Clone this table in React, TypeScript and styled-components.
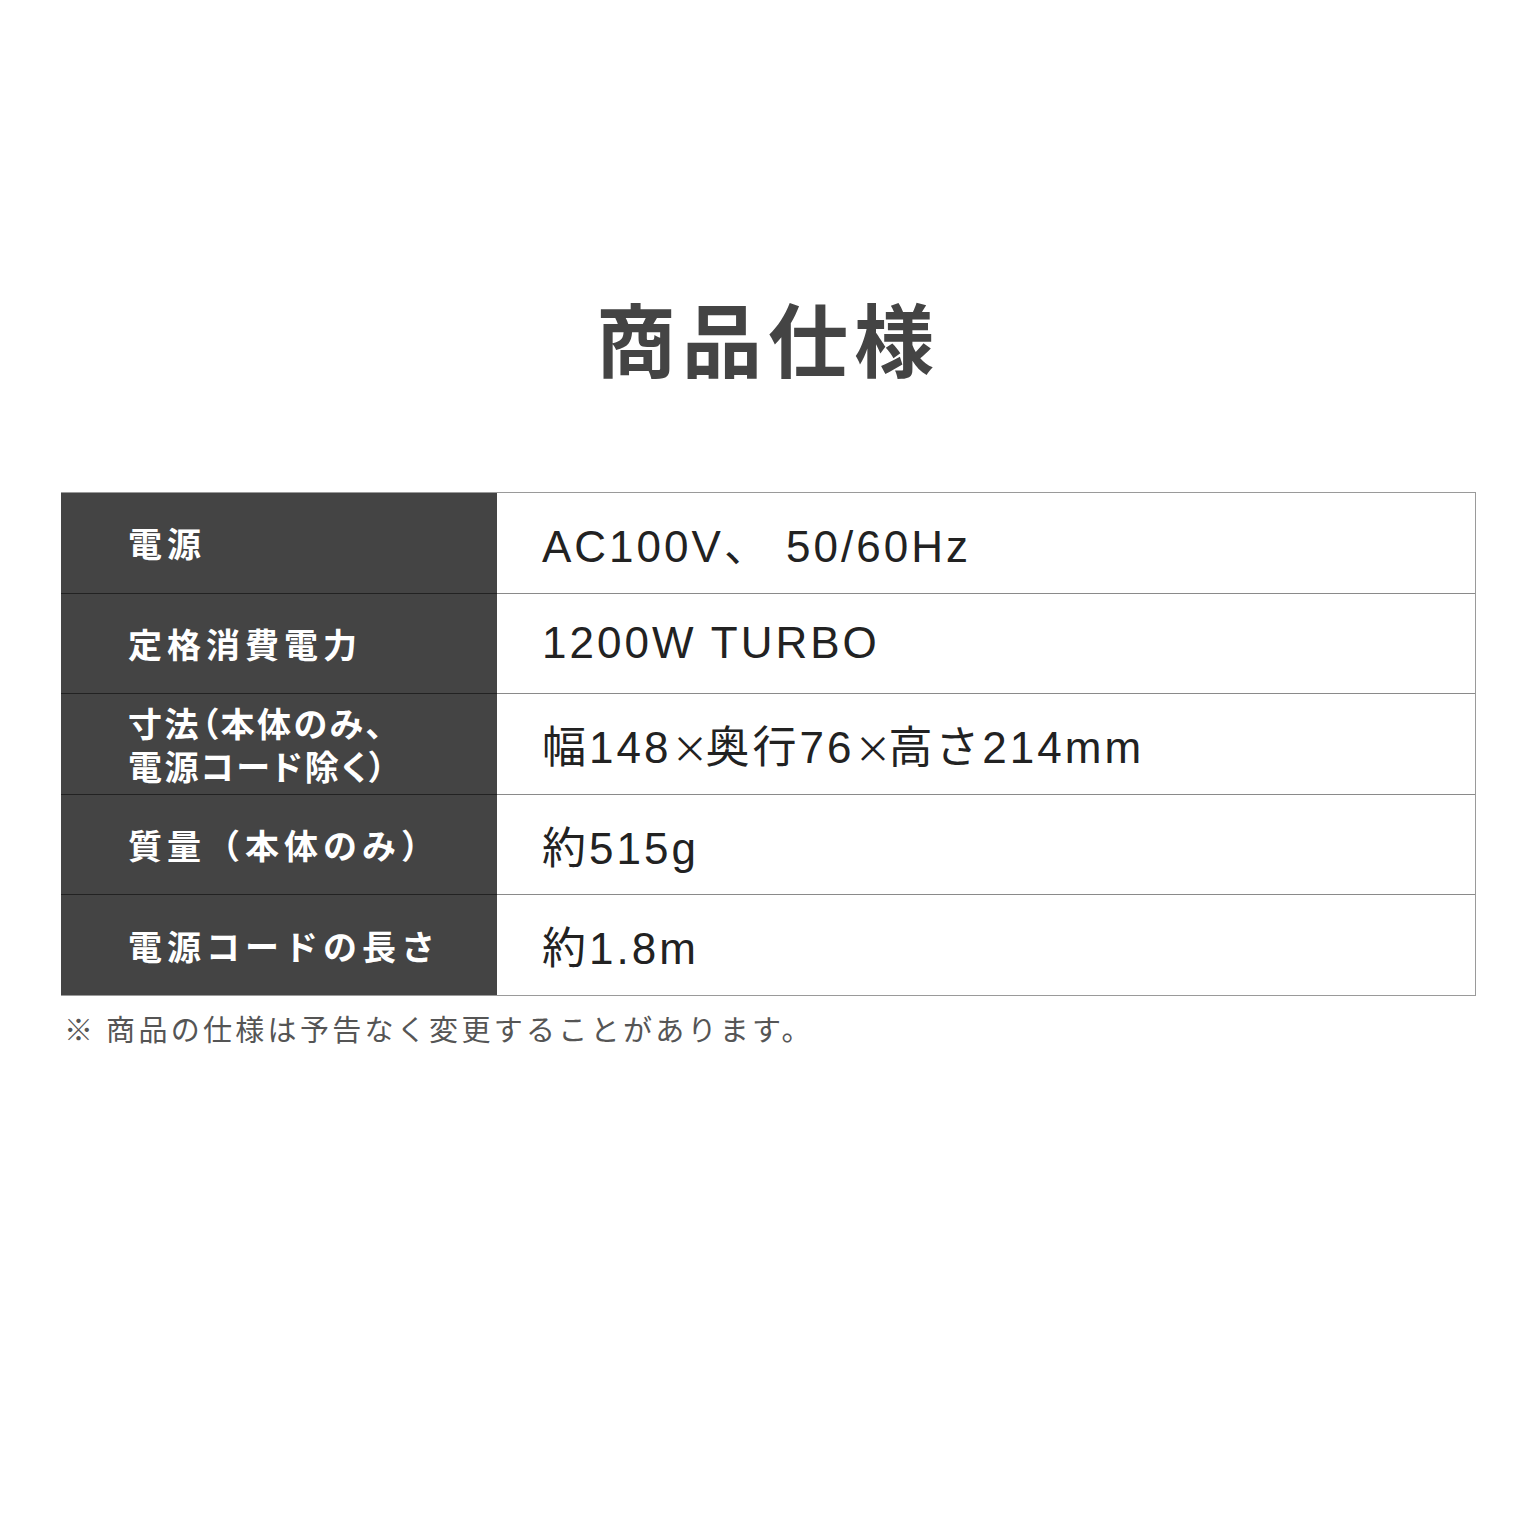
import styled, { createGlobalStyle } from 'styled-components';

const GlobalStyle = createGlobalStyle`
  html, body {
    margin: 0;
    padding: 0;
    background: #fff;
  }
  body {
    font-family: "Noto Sans CJK JP", "Noto Sans", sans-serif;
  }
`;

const Page = styled.div`
  width: 1536px;
  height: 1536px;
  box-sizing: border-box;
  padding-top: 290px;
  background: #fff;
`;

const Title = styled.h1`
  margin: 0;
  text-align: center;
  font-size: 80px;
  line-height: 92px;
  font-weight: 700;
  letter-spacing: 6px;
  color: #444;
`;

const SpecTable = styled.div`
  margin: 110px 60px 0 61px;
  border: 1px solid #9a9a9a;
  border-left: none;
  display: flex;
  flex-direction: column;
`;

const Row = styled.div<{ $first?: boolean }>`
  display: grid;
  grid-template-columns: 436px 1fr;
  height: 99.6px;
  border-top: ${p => (p.$first ? 'none' : '1px solid #8a8a8a')};
`;

const Label = styled.div<{ $first?: boolean; $tight?: boolean }>`
  background: #444;
  color: #fff;
  display: flex;
  align-items: center;
  padding-left: 67px;
  font-size: 34px;
  line-height: 43px;
  font-weight: 700;
  letter-spacing: ${p => (p.$tight ? '2.5px' : '5px')};
  font-feature-settings: ${p => (p.$tight ? '"palt"' : 'normal')};
  margin-top: ${p => (p.$first ? '0' : '-1px')};
  border-top: ${p => (p.$first ? 'none' : '1px solid #222')};
`;

const Value = styled.div`
  display: flex;
  align-items: center;
  padding-left: 45px;
  font-family: "Liberation Sans", "Noto Sans CJK JP", sans-serif;
  font-size: 44px;
  font-weight: 400;
  letter-spacing: 3px;
  color: #222;
  white-space: pre;
`;

// the multiplication sign is drawn full width in the reference
const Times = styled.span`
  font-family: "Noto Sans CJK JP", sans-serif;
  font-size: 37px;
  letter-spacing: -5px;
  margin-right: 2px;
`;

const Note = styled.p`
  margin: 12px 0 0 64px;
  font-size: 29px;
  line-height: 40px;
  letter-spacing: 3.3px;
  color: #555;
`;

const specs = [
  { label: ['電源'], value: 'AC100V、 50/60Hz' },
  { label: ['定格消費電力'], value: '1200W TURBO' },
  { label: ['寸法（本体のみ、', '電源コード除く）'], value: '幅148×奥行76×高さ214mm' },
  { label: ['質量（本体のみ）'], value: '約515g' },
  { label: ['電源コードの長さ'], value: '約1.8m' },
];

const renderValue = (v: string) =>
  v.split('×').map((part, i) => (
    <span key={i}>
      {i > 0 && <Times>×</Times>}
      {part}
    </span>
  ));

export default function App() {
  return (
    <>
      <GlobalStyle />
      <Page>
        <Title>商品仕様</Title>
        <SpecTable>
          {specs.map((s, i) => (
            <Row key={i} $first={i === 0}>
              <Label $first={i === 0} $tight={s.label.length > 1}>
                <div>
                  {s.label.map((l, j) => (
                    <div key={j}>{l}</div>
                  ))}
                </div>
              </Label>
              <Value>{renderValue(s.value)}</Value>
            </Row>
          ))}
        </SpecTable>
        <Note>※ 商品の仕様は予告なく変更することがあります。</Note>
      </Page>
    </>
  );
}
